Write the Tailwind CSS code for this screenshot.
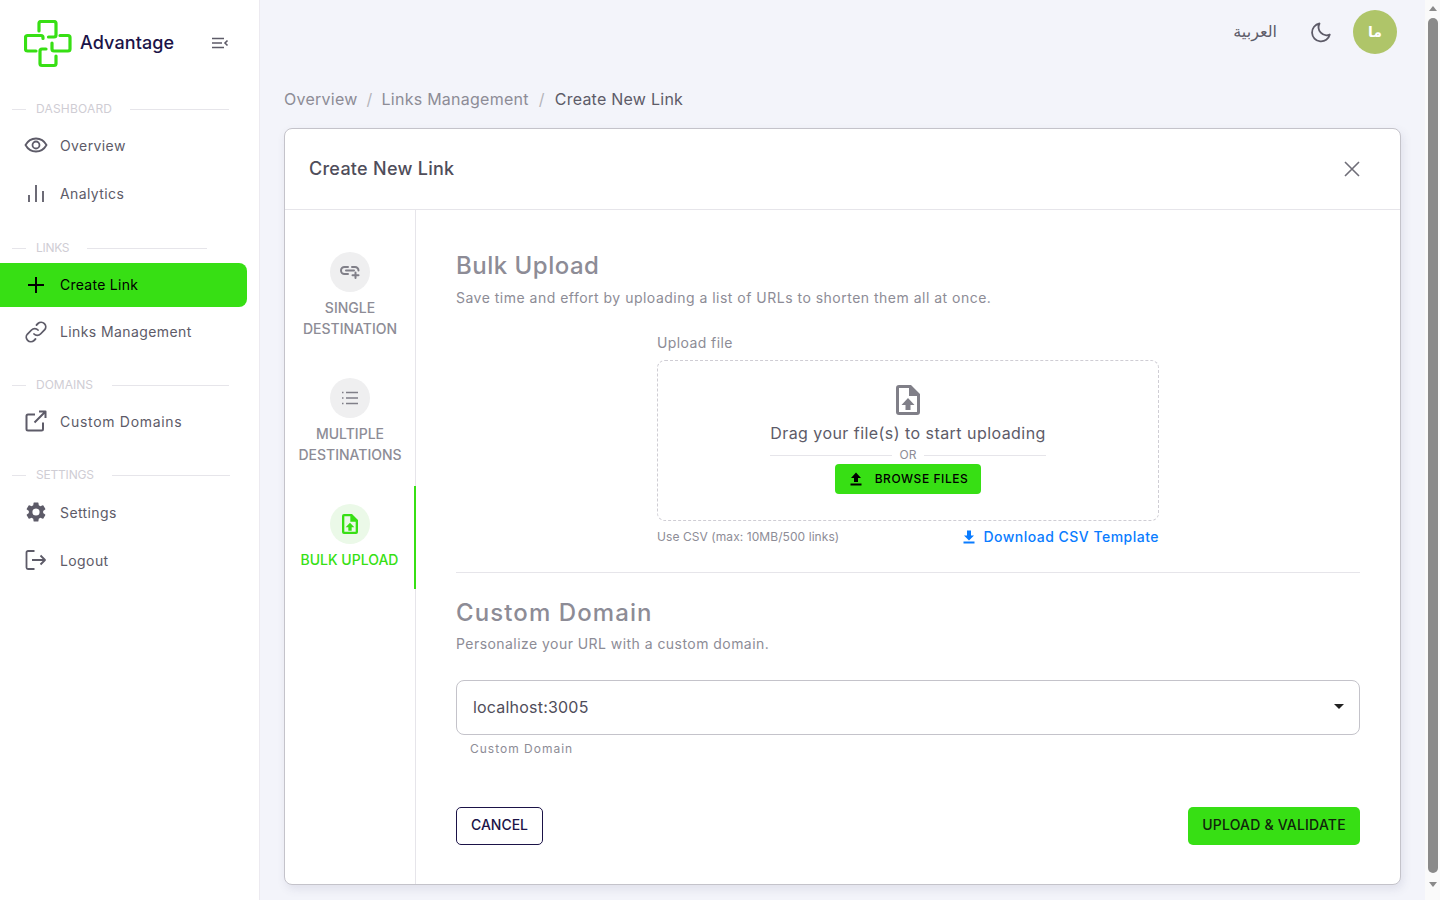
<!DOCTYPE html>
<html lang="en">
<head>
    <meta charset="UTF-8">
    <meta name="viewport" content="width=device-width, initial-scale=1.0">
    <title>Create New Link</title>
    <script src="https://cdn.jsdelivr.net/npm/@tailwindcss/browser@4"></script>
</head>
<body class="h-screen overflow-hidden flex bg-[#f3f4fa] text-[#5d5b68] font-['Inter','DejaVu_Sans',sans-serif]">

<!-- Sidebar -->
<aside class="w-[260px] shrink-0 h-full bg-white border-r border-[#eceaf0]">
    <div class="h-[86px] flex items-center pl-[24px]">
        <svg class="w-[48px] h-[48px] shrink-0 mt-[2px]" viewBox="24 20 48 48" fill="none" stroke="#37df14" stroke-width="3.200" stroke-linecap="round" stroke-linejoin="round">
            <path d="M39 31V23.500Q39 21.500 41 21.500H54Q56 21.500 56 23.500V35Q56 37 54 37H48.500"/>
            <path d="M46 49H42Q40 49 40 51V63.500Q40 65.500 42 65.500H54Q56 65.500 56 63.500V56"/>
            <path d="M43 38.500V37.500Q43 35.500 41 35.500H27.500Q25.500 35.500 25.500 37.500V49Q25.500 51 27.500 51H36"/>
            <path d="M60 35.500H68Q70 35.500 70 37.500V49Q70 51 68 51H54Q52 51 52 49V43"/>
        </svg>
        <span class="ml-[8px] -mt-[2px] w-[98px] text-[18px] font-medium tracking-[0.1px] text-[#1b1347] whitespace-nowrap">Advantage</span>
        <svg class="ml-[33px] w-[18px] h-[18px] text-[#5d5b68]" viewBox="0 0 18 18" fill="none" stroke="currentColor" stroke-width="1.600">
            <path d="M1 4.500H13M1 9H11M1 13.500H13M16.500 6.500L14 9L16.500 11.500"/>
        </svg>
    </div>

    <div class="mt-[14px] h-[18px] flex items-center text-[12px] text-[#cfcdd4]">
        <span class="w-[14px] h-px bg-[#e6e5ea] ml-[12px]"></span><span class="ml-[10px] tracking-[0.2px]">DASHBOARD</span><span class="ml-[18px] w-[99px] h-px bg-[#e6e5ea]"></span>
    </div>
    <nav class="mt-[5px] flex flex-col gap-[4px] text-[14px] tracking-[0.4px]">
        <a class="h-[44px] flex items-center pl-[24px]">
            <svg class="w-[24px] h-[24px]" viewBox="0 0 24 24" fill="none" stroke="currentColor" stroke-width="1.800"><path d="M1.500 12C4 7.500 7.500 5.500 12 5.500S20 7.500 22.500 12C20 16.500 16.500 18.500 12 18.500S4 16.500 1.500 12Z"/><circle cx="12" cy="12" r="3.500"/></svg>
            <span class="ml-[12px]">Overview</span>
        </a>
        <a class="h-[44px] flex items-center pl-[24px]">
            <svg class="w-[24px] h-[24px]" viewBox="0 0 24 24" fill="none" stroke="currentColor" stroke-width="1.800"><path d="M5 21V14M12 21V4M19 21V10"/></svg>
            <span class="ml-[12px]">Analytics</span>
        </a>
    </nav>

    <div class="mt-[24px] h-[18px] flex items-center text-[12px] text-[#cfcdd4]">
        <span class="w-[14px] h-px bg-[#e6e5ea] ml-[12px]"></span><span class="ml-[10px] tracking-[-0.3px]">LINKS</span><span class="ml-[18px] w-[120px] h-px bg-[#e6e5ea]"></span>
    </div>
    <nav class="mt-[6px] flex flex-col gap-[3px] text-[14px] tracking-[0.4px]">
        <a class="h-[44px] w-[247px] flex items-center pl-[24px] bg-[#37df14] rounded-r-lg text-black">
            <svg class="w-[24px] h-[24px]" viewBox="0 0 24 24" fill="none" stroke="currentColor" stroke-width="2"><path d="M12 4V20M4 12H20"/></svg>
            <span class="ml-[12px] -mt-[2px] tracking-[0.27px]">Create Link</span>
        </a>
        <a class="h-[44px] flex items-center pl-[24px]">
            <svg class="w-[24px] h-[24px]" viewBox="0 0 24 24" fill="none" stroke="currentColor" stroke-width="1.800" stroke-linecap="round"><path d="M10 14a4.500 4.500 0 0 0 6.500 0l4-4a4.600 4.600 0 0 0-6.500-6.500l-1.500 1.500"/><path d="M14 10a4.500 4.500 0 0 0-6.500 0l-4 4a4.600 4.600 0 0 0 6.500 6.500l1.500-1.500"/></svg>
            <span class="ml-[12px] -mt-[2px]">Links Management</span>
        </a>
    </nav>

    <div class="mt-[22px] h-[18px] flex items-center text-[12px] text-[#cfcdd4]">
        <span class="w-[14px] h-px bg-[#e6e5ea] ml-[12px]"></span><span class="ml-[10px]">DOMAINS</span><span class="ml-[19px] w-[117px] h-px bg-[#e6e5ea]"></span>
    </div>
    <nav class="mt-[5px] text-[14px]">
        <a class="h-[44px] flex items-center pl-[24px]">
            <svg class="w-[24px] h-[24px]" viewBox="0 0 24 24" fill="none" stroke="currentColor" stroke-width="2" stroke-linejoin="round"><path d="M19 13.500V20a1.500 1.500 0 0 1-1.500 1.500H4A1.500 1.500 0 0 1 2.500 20V7A1.500 1.500 0 0 1 4 5.500H11"/><path d="M15 2.500H21.500V9M21.500 2.500L10.500 13.500"/></svg>
            <span class="ml-[12px] tracking-[0.7px]">Custom Domains</span>
        </a>
    </nav>

    <div class="mt-[23px] h-[18px] flex items-center text-[12px] text-[#cfcdd4]">
        <span class="w-[14px] h-px bg-[#e6e5ea] ml-[12px]"></span><span class="ml-[10px] tracking-[-0.2px]">SETTINGS</span><span class="ml-[18px] w-[118px] h-px bg-[#e6e5ea]"></span>
    </div>
    <nav class="mt-[6px] flex flex-col gap-[4px] text-[14px] tracking-[0.4px]">
        <a class="h-[44px] flex items-center pl-[24px]">
            <svg class="w-[24px] h-[24px]" viewBox="0 0 24 24" fill="currentColor"><path d="M19.140 12.940c.040-.300.060-.610.060-.940 0-.320-.020-.640-.070-.940l2.030-1.580a.490.490 0 0 0 .120-.610l-1.920-3.320a.490.490 0 0 0-.590-.220l-2.390.960a7 7 0 0 0-1.620-.940l-.360-2.540a.480.480 0 0 0-.480-.410h-3.840a.470.470 0 0 0-.470.410l-.360 2.540c-.590.240-1.130.570-1.620.940l-2.390-.960a.480.480 0 0 0-.590.220L2.740 8.870a.470.470 0 0 0 .120.610l2.030 1.580c-.050.300-.090.630-.090.940s.020.640.070.940l-2.030 1.580a.490.490 0 0 0-.120.610l1.920 3.320c.120.220.370.290.590.220l2.390-.960c.500.380 1.030.700 1.620.940l.360 2.540c.050.240.240.410.480.410h3.840c.240 0 .440-.170.470-.410l.360-2.540c.590-.240 1.130-.560 1.620-.940l2.390.960c.220.080.470 0 .590-.220l1.920-3.320a.470.470 0 0 0-.120-.610l-2.010-1.580zM12 15.600A3.610 3.610 0 0 1 8.400 12 3.610 3.610 0 0 1 12 8.400a3.610 3.610 0 0 1 3.600 3.600 3.610 3.610 0 0 1-3.600 3.600z"/></svg>
            <span class="ml-[12px]">Settings</span>
        </a>
        <a class="h-[44px] flex items-center pl-[24px]">
            <svg class="w-[24px] h-[24px]" viewBox="0 0 24 24" fill="none" stroke="currentColor" stroke-width="1.800" stroke-linejoin="round"><path d="M10.500 3H4A1.500 1.500 0 0 0 2.500 4.500V19.500A1.500 1.500 0 0 0 4 21H10.500"/><path d="M8 12H21M16.500 7.500L21 12L16.500 16.500"/></svg>
            <span class="ml-[12px]">Logout</span>
        </a>
    </nav>
</aside>

<!-- Main -->
<main class="flex-1 min-w-0 h-full px-[24px]">
    <div class="h-[64px] flex items-center justify-end pr-[4px]">
        <span class="text-[16px] font-['DejaVu_Sans',sans-serif]" dir="rtl">العربية</span>
        <svg class="ml-[32px] w-[24px] h-[24px]" viewBox="0 0 24 24" fill="none" stroke="currentColor" stroke-width="1.800" stroke-linejoin="round"><path d="M10.500 3.500A9 9 0 1 0 20.800 14.500A8 8 0 0 1 10.500 3.500Z"/></svg>
        <div class="ml-[20px] w-[44px] h-[44px] rounded-full bg-[#afc569] text-white font-bold text-[14px] flex items-center justify-center font-['DejaVu_Sans',sans-serif]">ما</div>
    </div>

    <div class="mt-[24px] h-[22px] flex items-center text-[16px] tracking-[0.25px] text-[#8d8c96]">
        <span>Overview</span><span class="mx-[9px] text-[#b5b4bb]">/</span><span>Links Management</span><span class="mx-[10px] text-[#b5b4bb]">/</span><span class="text-[#5d5b68]">Create New Link</span>
    </div>

    <div class="mt-[18px] h-[757px] bg-white border border-[#c4c3ca] rounded-lg shadow-[2px_4px_10px_rgba(80,80,120,0.12)] flex flex-col overflow-hidden">
        <div class="h-[81px] shrink-0 border-b border-[#e6e5ea] flex items-center justify-between pl-[24px] pr-[39px]">
            <h2 class="-mt-[2px] text-[18px] font-medium tracking-[0.27px] text-[#4f4d5a]">Create New Link</h2>
            <svg class="w-[18px] h-[18px] text-[#6f6e78]" viewBox="0 0 18 18" fill="none" stroke="currentColor" stroke-width="1.600"><path d="M2 2L16 16M16 2L2 16"/></svg>
        </div>
        <div class="flex-1 flex min-h-0">
            <!-- Tabs -->
            <div class="w-[131px] shrink-0 border-r border-[#e6e5ea] pt-[24px] text-[14px] font-medium leading-[21px] text-[#8d8c96] text-center">
                <div class="h-[126px] pt-[18px] flex flex-col items-center">
                    <div class="w-[40px] h-[40px] rounded-full bg-[#efeff0] flex items-center justify-center">
                        <svg class="w-[22px] h-[22px] -mt-[2px]" viewBox="0 0 22 22" fill="none" stroke="#807f88" stroke-width="2" stroke-linecap="round"><path d="M9 7H5.500a3.500 3.500 0 0 0 0 7H9M7 10.500H15M13 7H16a3.500 3.500 0 0 1 3.500 3.500M16.500 12.500V18M13.500 15.200H19.500"/></svg>
                    </div>
                    <p class="mt-[5px]">SINGLE<br>DESTINATION</p>
                </div>
                <div class="h-[126px] pt-[18px] flex flex-col items-center">
                    <div class="w-[40px] h-[40px] rounded-full bg-[#efeff0] flex items-center justify-center">
                        <svg class="w-[18px] h-[18px]" viewBox="0 0 18 18" fill="none" stroke="#807f88" stroke-width="1.600"><path d="M1 3.500H2.500M5 3.500H17M1 9H2.500M5 9H17M1 14.500H2.500M5 14.500H17"/></svg>
                    </div>
                    <p class="mt-[5px]">MULTIPLE<br>DESTINATIONS</p>
                </div>
                <div class="h-[103px] pt-[18px] flex flex-col items-center text-[#37df14] border-r-2 border-[#37df14] -mr-px">
                    <div class="w-[40px] h-[40px] rounded-full bg-[#ebf9e8] flex items-center justify-center">
                        <svg class="w-[16px] h-[20px]" viewBox="0 0 24 30" fill="#37df14" fill-rule="evenodd"><path d="M3 0H15L24 9V27a3 3 0 0 1-3 3H3a3 3 0 0 1-3-3V3a3 3 0 0 1 3-3ZM3.500 3.500V26.500H20.500V11.500H12.500V3.500ZM12 13L5.500 20H9.500V25H14.500V20H18.500Z"/></svg>
                    </div>
                    <p class="mt-[5px] whitespace-nowrap">BULK UPLOAD</p>
                </div>
            </div>

            <!-- Form -->
            <div class="flex-1 min-w-0 px-[40px] pt-[39px]">
                <h3 class="text-[24px] leading-[34px] font-medium tracking-[0.5px] text-[#8d8c96]">Bulk Upload</h3>
                <p class="mt-[4px] text-[14px] leading-[21px] tracking-[0.49px] text-[#8d8c96]">Save time and effort by uploading a list of URLs to shorten them all at once.</p>

                <div class="mt-[24px] w-[502px] mx-auto">
                    <label class="block text-[14px] leading-[21px] tracking-[0.4px] text-[#8d8c96]">Upload file</label>
                    <div class="mt-[7px] h-[161px] border border-dashed border-[#cfcdd4] rounded-lg flex flex-col items-center pt-[24px]">
                        <svg class="w-[24px] h-[30px] shrink-0" viewBox="0 0 24 30" fill="#807f88" fill-rule="evenodd"><path d="M3 0H15L24 9V27a3 3 0 0 1-3 3H3a3 3 0 0 1-3-3V3a3 3 0 0 1 3-3ZM3 3V27H21V11H13V3ZM12 13L5.500 20H9.500V25H14.500V20H18.500Z"/></svg>
                        <p class="mt-[6px] text-[16px] leading-[24px] tracking-[0.45px]">Drag your file(s) to start uploading</p>
                        <div class="mt-[1px] w-[276px] h-[18px] flex items-center text-[12px] text-[#8d8c96]">
                            <span class="flex-1 h-px bg-[#e6e5ea]"></span><span class="mx-[8px]">OR</span><span class="flex-1 h-px bg-[#e6e5ea]"></span>
                        </div>
                        <button class="w-[146px] h-[30px] bg-[#37df14] rounded-[4px] text-black text-[12px] font-medium tracking-[0.55px] flex items-center justify-center">
                            <svg class="w-[16px] h-[16px] mr-[11px]" viewBox="0 0 16 16" fill="currentColor"><path d="M8 1.500L3 7H6V11H10V7H13L8 1.500ZM2.500 12.500H13.500V14.500H2.500Z"/></svg>
                            BROWSE FILES
                        </button>
                    </div>
                    <div class="mt-[5px] h-[21px] flex items-center justify-between">
                        <span class="text-[12px] tracking-[0.07px] text-[#8d8c96]">Use CSV (max: 10MB/500 links)</span>
                        <a class="flex items-center text-[14px] font-medium tracking-[0.48px] text-[#0a7cff]">
                            <svg class="w-[16px] h-[16px] mr-[6px]" viewBox="0 0 16 16" fill="currentColor"><path d="M6 1.500H10V6.500H13L8 11.500L3 6.500H6ZM2.500 12.500H13.500V14.500H2.500Z"/></svg>
                            Download CSV Template
                        </a>
                    </div>
                </div>

                <div class="mt-[25px] h-px bg-[#e6e5ea]"></div>

                <h3 class="mt-[23px] text-[24px] leading-[34px] font-medium tracking-[1.1px] text-[#8d8c96]">Custom Domain</h3>
                <p class="mt-[3px] text-[14px] leading-[21px] tracking-[0.45px] text-[#8d8c96]">Personalize your URL with a custom domain.</p>

                <div class="mt-[26px] h-[55px] border border-[#c4c3ca] rounded-lg flex items-center justify-between pl-[16px] pr-[15px] text-[16px]">
                    <span class="-mt-[2px] tracking-[0.2px] text-[#4f4d5a]">localhost:3005</span>
                    <span class="-mt-[2px] w-0 h-0 border-x-[5px] border-x-transparent border-t-[5px] border-t-[#222]"></span>
                </div>
                <p class="mt-[5px] pl-[14px] text-[12px] leading-[18px] tracking-[1px] text-[#8d8c96]">Custom Domain</p>

                <div class="mt-[49px] flex items-center justify-between">
                    <button class="w-[87px] h-[38px] pb-[3px] border border-[#1b1347] rounded-[5px] text-[14px] font-medium text-[#1b1347]">CANCEL</button>
                    <button class="w-[172px] h-[38px] pb-[3px] bg-[#37df14] rounded-[5px] text-[14px] font-medium text-[#10240b] tracking-[0.2px]">UPLOAD &amp; VALIDATE</button>
                </div>
            </div>
        </div>
    </div>
</main>

<!-- Scrollbar -->
<div class="w-[15px] shrink-0 h-full bg-[#fafafa] flex flex-col items-center">
    <span class="mt-[6px] w-0 h-0 border-x-[4px] border-x-transparent border-b-[5px] border-b-[#8a8a8a]"></span>
    <div class="mt-[7px] w-[10px] h-[855px] rounded-full bg-[#8a8a8a]"></div>
    <span class="mt-[9px] w-0 h-0 border-x-[4px] border-x-transparent border-t-[5px] border-t-[#8a8a8a]"></span>
</div>

</body>
</html>
